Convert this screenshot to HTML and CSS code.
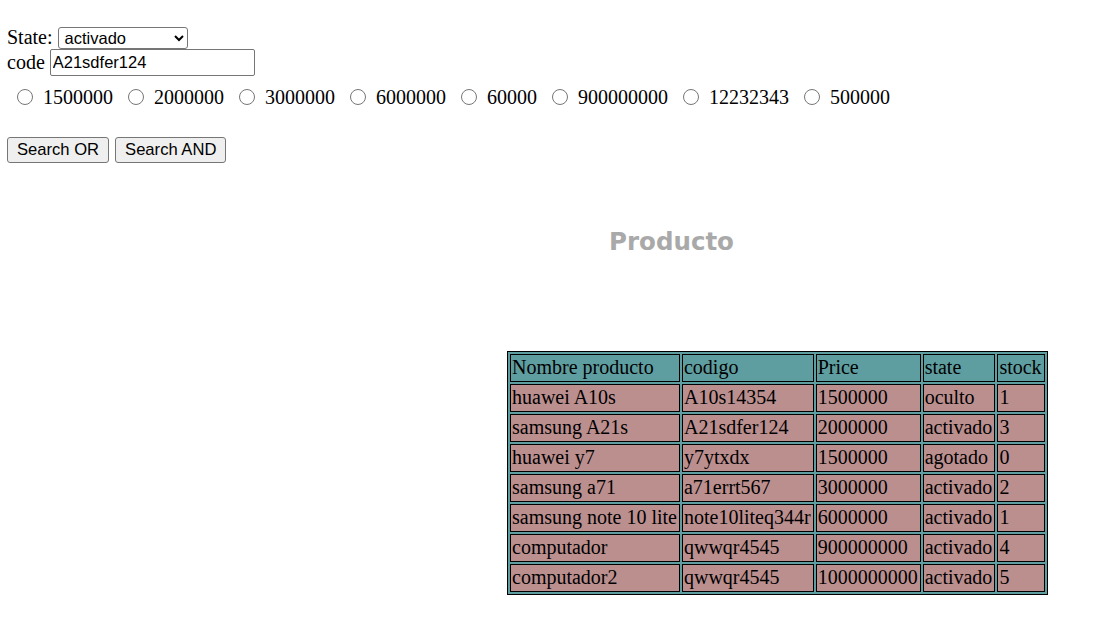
FILE: index.html
```html
<!DOCTYPE html>
<html lang="es">
<head>
<meta charset="utf-8">
<title>Producto</title>
<link rel="stylesheet" href="styles.css">
</head>
<body>
<form class="filters">
  <div class="row row-state">
    <label for="state">State:</label>
    <select id="state" class="select">
      <option>activado</option>
      <option>oculto</option>
      <option>agotado</option>
    </select>
  </div>
  <div class="row row-code">
    <label for="code">code</label>
    <input id="code" class="text-input" type="text" value="A21sdfer124">
  </div>
  <div class="radios">
    <label class="radio-item"><input type="radio" name="price" class="radio"><span>1500000</span></label>
    <label class="radio-item"><input type="radio" name="price" class="radio"><span>2000000</span></label>
    <label class="radio-item"><input type="radio" name="price" class="radio"><span>3000000</span></label>
    <label class="radio-item"><input type="radio" name="price" class="radio"><span>6000000</span></label>
    <label class="radio-item"><input type="radio" name="price" class="radio"><span>60000</span></label>
    <label class="radio-item"><input type="radio" name="price" class="radio"><span>900000000</span></label>
    <label class="radio-item"><input type="radio" name="price" class="radio"><span>12232343</span></label>
    <label class="radio-item"><input type="radio" name="price" class="radio"><span>500000</span></label>
  </div>
  <div class="buttons">
    <button type="button" class="btn">Search OR</button>
    <button type="button" class="btn">Search AND</button>
  </div>
</form>

<h2 class="title">Producto</h2>

<table class="products">
  <tr class="head">
    <td>Nombre producto</td><td>codigo</td><td>Price</td><td>state</td><td>stock</td>
  </tr>
  <tr><td>huawei A10s</td><td>A10s14354</td><td>1500000</td><td>oculto</td><td>1</td></tr>
  <tr><td>samsung A21s</td><td>A21sdfer124</td><td>2000000</td><td>activado</td><td>3</td></tr>
  <tr><td>huawei y7</td><td>y7ytxdx</td><td>1500000</td><td>agotado</td><td>0</td></tr>
  <tr><td>samsung a71</td><td>a71errt567</td><td>3000000</td><td>activado</td><td>2</td></tr>
  <tr><td>samsung note 10 lite</td><td>note10liteq344r</td><td>6000000</td><td>activado</td><td>1</td></tr>
  <tr><td>computador</td><td>qwwqr4545</td><td>900000000</td><td>activado</td><td>4</td></tr>
  <tr><td>computador2</td><td>qwwqr4545</td><td>1000000000</td><td>activado</td><td>5</td></tr>
</table>
</body>
</html>
```

FILE: styles.css
```css
html, body {
  background: #ffffff;
}

body {
  margin: 8px 8px 8px 7px;
  font-family: "Liberation Serif", "Times New Roman", serif;
  font-size: 20px;
  color: #000000;
}

.filters {
  padding-top: 18px;
}

.row {
  display: flex;
  align-items: center;
  gap: 5px;
  line-height: 23px;
}

.row-state {
  height: 23px;
}

.row-code {
  height: 27px;
}

.select {
  width: 130px;
  height: 22px;
  box-sizing: border-box;
  font-family: "Liberation Sans", Arial, sans-serif;
  font-size: 16.5px;
  border: 1px solid #767676;
  border-radius: 3px;
  background: #ffffff;
  color: #000000;
  padding: 0 2px;
}

.text-input {
  width: 205px;
  height: 27px;
  box-sizing: border-box;
  font-family: "Liberation Sans", Arial, sans-serif;
  font-size: 16.5px;
  border: 1px solid #767676;
  border-radius: 2px;
  padding: 0 2px;
  margin: 0;
  color: #000000;
}

.radios {
  display: flex;
  align-items: center;
  margin-top: 9px;
  height: 24px;
  padding-left: 10px;
  gap: 15px;
}

.radio-item {
  display: flex;
  align-items: center;
  gap: 10px;
  line-height: 23px;
}

.radio {
  width: 16px;
  height: 16px;
  margin: 0;
}

.buttons {
  display: flex;
  gap: 6px;
  margin-top: 28px;
}

.btn {
  height: 26px;
  box-sizing: border-box;
  font-family: "Liberation Sans", Arial, sans-serif;
  font-size: 16.6px;
  padding: 0 9px;
  margin: 0;
  background: #efefef;
  border: 1px solid #767676;
  border-radius: 3px;
  color: #000000;
}

.title {
  margin: 65px 0 0 229px;
  text-align: center;
  font-family: "DejaVu Sans", Verdana, sans-serif;
  font-weight: bold;
  font-size: 24.5px;
  line-height: 28px;
  color: #a9a9a9;
}

.products {
  margin: 95px 0 0 500px;
  border: 1px solid #000000;
  border-spacing: 2px;
  background: #5f9ea0;
  font-size: 20px;
}

.products td {
  border: 1px solid #000000;
  padding: 0 2px 2px 1px;
  line-height: 24px;
  background: #bc8f8f;
  white-space: nowrap;
}

.products .head td {
  background: #5f9ea0;
}
```
